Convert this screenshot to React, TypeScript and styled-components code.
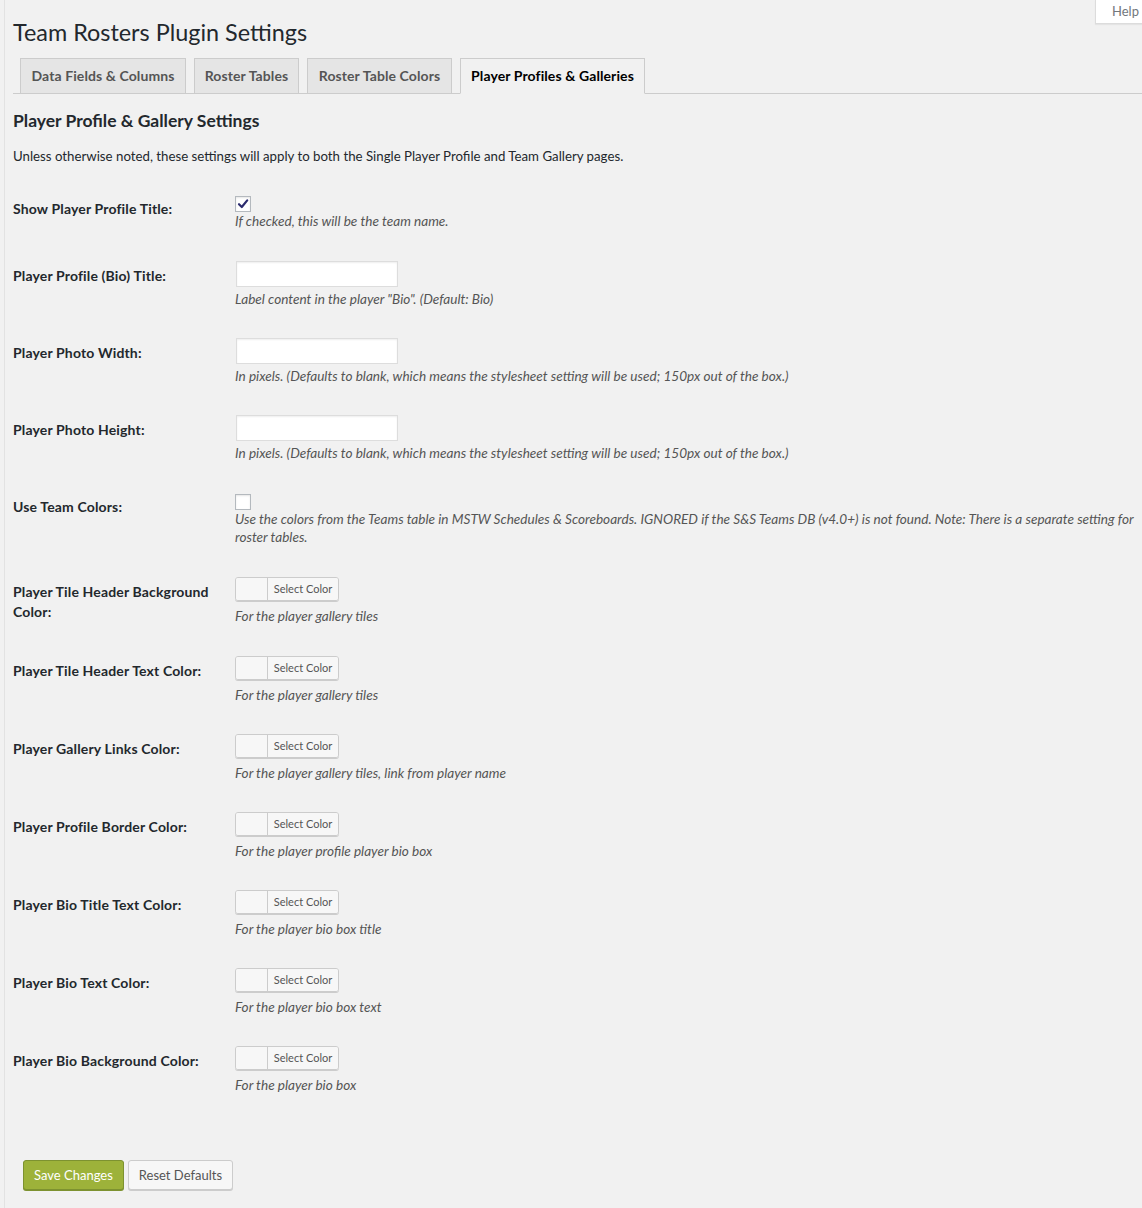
import React from "react";
import styled, { createGlobalStyle } from "styled-components";

const Global = createGlobalStyle`
  html, body { margin: 0; padding: 0; background: #f1f1f1; }
  body { overflow: hidden; font-family: Lato, "Open Sans", sans-serif; color: #23282d; }
`;

const Page = styled.div`
  position: relative;
  min-height: 1208px;
  width: 1300px;
  margin-left: 4px;
  border-left: 1px solid #e2e2e2;
  padding-left: 8px;
  box-sizing: border-box;
`;

const HelpTab = styled.div`
  position: absolute;
  top: 0;
  left: 1090px;
  width: 60px;
  height: 24px;
  background: #fff;
  border: 1px solid #dcdcdc;
  border-top: none;
  box-shadow: 0 1px 1px rgba(0,0,0,0.05);
  font-size: 13px;
  color: #72777c;
  padding-left: 16px;
  line-height: 22px;
  box-sizing: border-box;
`;

const Title = styled.h1`
  margin: 0;
  padding-top: 18px;
  font-size: 23.4px;
  font-weight: 400;
  line-height: 29px;
  color: #23282d;
`;

const TabBar = styled.div`
  display: flex;
  gap: 8px;
  margin-top: 11px;
  padding-left: 7px;
  border-bottom: 1px solid #ccc;
  height: 35px;
  box-sizing: content-box;
`;

const Tab = styled.div<{ $active?: boolean; $w: number }>`
  box-sizing: border-box;
  border: 1px solid #ccc;
  border-bottom: ${(p) => (p.$active ? "1px solid #f1f1f1" : "none")};
  background: ${(p) => (p.$active ? "#f1f1f1" : "#e5e5e5")};
  color: ${(p) => (p.$active ? "#000" : "#555")};
  font-size: 14px;
  font-weight: 700;
  letter-spacing: 0.1px;
  padding: 0;
  line-height: 34px;
  width: ${(p) => p.$w}px;
  text-align: center;
  margin-bottom: ${(p) => (p.$active ? "-1px" : "0")};
  height: ${(p) => (p.$active ? "36px" : "35px")};
`;

const SectionTitle = styled.h2`
  margin: 16px 0 0;
  font-size: 17.5px;
  font-weight: 700;
  line-height: 22px;
`;

const Intro = styled.p`
  margin: 15px 0 0;
  font-size: 13.25px;
  line-height: 18px;
  color: #23282d;
`;

const Form = styled.div`
  margin-top: 14px;
  display: flex;
  flex-direction: column;
`;

const Row = styled.div`
  display: grid;
  grid-template-columns: 222px 1fr;
`;

const Label = styled.div`
  padding: 20px 10px 0 0;
  font-size: 14px;
  font-weight: 700;
  letter-spacing: 0.15px;
  line-height: 20px;
  color: #23282d;
`;

const Field = styled.div<{ $bottom?: number }>`
  padding: 15px 0 ${(p) => p.$bottom ?? 15}px;
  display: flex;
  flex-direction: column;
  align-items: flex-start;
`;

const Check = styled.span`
  display: block;
  margin-top: 2px;
  width: 16px;
  height: 16px;
  box-sizing: border-box;
  border: 1px solid #b4b9be;
  background: #fff;
  box-shadow: inset 0 1px 2px rgba(0,0,0,0.1);
  position: relative;
`;

const TextInput = styled.input`
  width: 162px;
  height: 26px;
  margin: 0 0 0 1px;
  box-sizing: border-box;
  border: 1px solid #ddd;
  background: #fff;
  box-shadow: inset 0 1px 2px rgba(0,0,0,0.07);
  outline: none;
`;

const Desc = styled.p<{ $top?: number }>`
  margin: ${(p) => p.$top ?? 0}px 0 0;
  font-size: 13.6px;
  font-style: italic;
  line-height: 18px;
  color: #555;
  white-space: nowrap;
`;

const ColorButton = styled.div`
  display: flex;
  height: 24px;
  width: 104px;
  box-sizing: border-box;
  border: 1px solid #ccc;
  border-radius: 3px;
  box-shadow: 0 1px 0 #ccc;
  overflow: hidden;
`;

const Swatch = styled.span`
  width: 31px;
  background: #f7f7f7;
  border-right: 1px solid #ccc;
`;

const SwatchLabel = styled.span`
  flex: 1;
  background: #f7f7f7;
  font-size: 11px;
  color: #555;
  line-height: 22px;
  text-align: center;
`;

const Actions = styled.div`
  display: flex;
  gap: 4px;
  margin-top: 51px;
  padding-left: 10px;
`;

const Button = styled.button<{ $primary?: boolean }>`
  height: 30px;
  box-sizing: border-box;
  padding: 0 10px;
  font-family: inherit;
  font-size: 13px;
  border-radius: 3px;
  border: 1px solid ${(p) => (p.$primary ? "#7d9230" : "#ccc")};
  background: ${(p) => (p.$primary ? "#9db23a" : "#f7f7f7")};
  color: ${(p) => (p.$primary ? "#fff" : "#555")};
  box-shadow: 0 1px 0 ${(p) => (p.$primary ? "#7d9230" : "#ccc")};
`;

const CheckMark = () => (
  <svg width="14" height="14" viewBox="0 0 14 14" style={{ position: "absolute", left: 0, top: 0 }}>
    <path d="M3 7.2 L5.8 10 L11.2 3.4" fill="none" stroke="#2b2b6e" strokeWidth="2.2" strokeLinecap="round" strokeLinejoin="round" />
  </svg>
);

const colorRows: [string, string][] = [
  ["Player Tile Header Background Color:", "For the player gallery tiles"],
  ["Player Tile Header Text Color:", "For the player gallery tiles"],
  ["Player Gallery Links Color:", "For the player gallery tiles, link from player name"],
  ["Player Profile Border Color:", "For the player profile player bio box"],
  ["Player Bio Title Text Color:", "For the player bio box title"],
  ["Player Bio Text Color:", "For the player bio box text"],
  ["Player Bio Background Color:", "For the player bio box"],
];

const textRows: [string, string][] = [
  ["Player Profile (Bio) Title:", 'Label content in the player "Bio". (Default: Bio)'],
  ["Player Photo Width:", "In pixels. (Defaults to blank, which means the stylesheet setting will be used; 150px out of the box.)"],
  ["Player Photo Height:", "In pixels. (Defaults to blank, which means the stylesheet setting will be used; 150px out of the box.)"],
];

const tabs: [string, number, boolean][] = [
  ["Data Fields & Columns", 166, false],
  ["Roster Tables", 105, false],
  ["Roster Table Colors", 145, false],
  ["Player Profiles & Galleries", 185, true],
];

export default function App() {
  return (
    <>
      <Global />
      <Page>
        <HelpTab>Help</HelpTab>
        <Title>Team Rosters Plugin Settings</Title>
        <TabBar>
          {tabs.map(([t, w, a]) => (
            <Tab key={t} $w={w} $active={a}>{t}</Tab>
          ))}
        </TabBar>
        <SectionTitle>Player Profile &amp; Gallery Settings</SectionTitle>
        <Intro>Unless otherwise noted, these settings will apply to both the Single Player Profile and Team Gallery pages.</Intro>
        <Form>
          <Row>
            <Label>Show Player Profile Title:</Label>
            <Field $bottom={16}>
              <Check><CheckMark /></Check>
              <Desc>If checked, this will be the team name.</Desc>
            </Field>
          </Row>
          {textRows.map(([l, d]) => (
            <Row key={l}>
              <Label>{l}</Label>
              <Field $bottom={15}>
                <TextInput type="text" />
                <Desc $top={3}>{d}</Desc>
              </Field>
            </Row>
          ))}
          <Row>
            <Label>Use Team Colors:</Label>
            <Field $bottom={16}>
              <Check />
              <Desc>
                Use the colors from the Teams table in MSTW Schedules &amp; Scoreboards. IGNORED if the S&amp;S Teams DB (v4.0+) is not found. Note: There is a separate setting for
                <br />
                roster tables.
              </Desc>
            </Field>
          </Row>
          {colorRows.map(([l, d], i) => (
            <Row key={l}>
              <Label>{l}</Label>
              <Field $bottom={i === 0 ? 16 : 15}>
                <ColorButton>
                  <Swatch />
                  <SwatchLabel>Select Color</SwatchLabel>
                </ColorButton>
                <Desc $top={6}>{d}</Desc>
              </Field>
            </Row>
          ))}
        </Form>
        <Actions>
          <Button $primary>Save Changes</Button>
          <Button>Reset Defaults</Button>
        </Actions>
      </Page>
    </>
  );
}
